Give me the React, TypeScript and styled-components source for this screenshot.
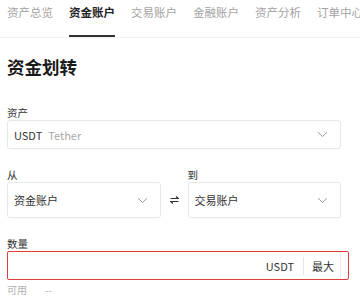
import styled, { createGlobalStyle } from 'styled-components'

const GlobalStyle = createGlobalStyle`
  html, body {
    margin: 0;
    padding: 0;
    background: #ffffff;
  }
  body {
    font-family: "Noto Sans CJK SC", "Noto Sans", sans-serif;
    color: #333333;
  }
  * { box-sizing: border-box; }
`

const Page = styled.div`
  width: 360px;
  height: 297px;
  overflow: hidden;
`

const TabBar = styled.nav`
  display: flex;
  gap: 16px;
  padding-left: 7px;
  height: 38px;
  border-bottom: 1px solid #f0f0f0;
  white-space: nowrap;
  overflow: hidden;
`

const Tab = styled.div<{ $active?: boolean }>`
  flex: none;
  padding-top: 4px;
  font-size: 11.5px;
  line-height: 17px;
  color: ${p => (p.$active ? '#222222' : '#a3a3a3')};
  font-weight: ${p => (p.$active ? 600 : 400)};
  border-bottom: 2px solid ${p => (p.$active ? '#333333' : 'transparent')};
  height: 37px;
`

const Content = styled.div`
  padding: 0 19px 0 7px;
`

const Title = styled.h1`
  margin: 19px 0 0;
  font-size: 17.5px;
  line-height: 20px;
  font-weight: 700;
  color: #1a1a1a;
`

const Label = styled.div`
  font-size: 10.5px;
  line-height: 14px;
  color: #333333;
`

const Field = styled.div<{ $top: number }>`
  display: flex;
  flex-direction: column;
  margin-top: ${p => p.$top}px;
`

const SelectBox = styled.div<{ $height: number }>`
  display: flex;
  align-items: center;
  height: ${p => p.$height}px;
  padding: 0 12px 0 6px;
  border: 1px solid #e8e8e8;
  border-radius: 3px;
  font-size: 11px;
  color: #333333;
  box-shadow: 0 1px 2px rgba(0, 0, 0, 0.03);
`

const SelectValue = styled.span`
  flex: 1;
  display: flex;
  gap: 6px;
`

const SubText = styled.span`
  color: #a8a8a8;
`

const Row = styled.div`
  display: grid;
  grid-template-columns: 1fr 27px 1fr;
  align-items: end;
  margin-top: 19px;
`

const SwapSlot = styled.div`
  height: 36px;
  display: flex;
  align-items: center;
  justify-content: center;
`

const AmountOutline = styled.div`
  width: 342px;
  border: 1.5px solid #e23b3b;
  border-radius: 2px;
  padding: 1px 7px 1px 0;
`

const AmountBox = styled.div`
  display: flex;
  align-items: center;
  justify-content: flex-end;
  height: 25px;
  border-right: 1px solid #ececec;
  font-size: 11px;
  color: #333333;
`

const Unit = styled.span`
  padding-right: 9px;
  border-right: 1px solid #e6e6e6;
  line-height: 18px;
`

const MaxButton = styled.span`
  padding: 0 6px 0 8px;
`

const Available = styled.div`
  display: flex;
  gap: 18px;
  margin-top: 3px;
  font-size: 10px;
  line-height: 13px;
  color: #b0b0b0;
`

const Chevron = () => (
  <svg width="11" height="7" viewBox="0 0 11 7" fill="none">
    <path d="M1 1.2 L5.5 5.5 L10 1.2" stroke="#9a9a9a" strokeWidth="1" />
  </svg>
)

const SwapIcon = () => (
  <svg width="9" height="8" viewBox="0 0 9 8" fill="none">
    <path d="M0.5 2.5 H8.5 L6 0.5" stroke="#333" strokeWidth="1.2" />
    <path d="M8.5 5.5 H0.5 L3 7.5" stroke="#333" strokeWidth="1.2" />
  </svg>
)

const tabs = ['资产总览', '资金账户', '交易账户', '金融账户', '资产分析', '订单中心']

export default function App() {
  return (
    <Page>
      <GlobalStyle />
      <TabBar>
        {tabs.map(t => (
          <Tab key={t} $active={t === '资金账户'}>{t}</Tab>
        ))}
      </TabBar>
      <Content>
        <Title>资金划转</Title>
        <Field $top={29}>
          <Label>资产</Label>
          <SelectBox $height={29}>
            <SelectValue>
              USDT <SubText>Tether</SubText>
            </SelectValue>
            <Chevron />
          </SelectBox>
        </Field>
        <Row>
          <Field $top={0}>
            <Label>从</Label>
            <SelectBox $height={36}>
              <SelectValue>资金账户</SelectValue>
              <Chevron />
            </SelectBox>
          </Field>
          <SwapSlot>
            <SwapIcon />
          </SwapSlot>
          <Field $top={0}>
            <Label>到</Label>
            <SelectBox $height={36}>
              <SelectValue>交易账户</SelectValue>
              <Chevron />
            </SelectBox>
          </Field>
        </Row>
        <Field $top={19}>
          <Label>数量</Label>
          <AmountOutline>
            <AmountBox>
              <Unit>USDT</Unit>
              <MaxButton>最大</MaxButton>
            </AmountBox>
          </AmountOutline>
        </Field>
        <Available>
          <span>可用</span>
          <span>--</span>
        </Available>
      </Content>
    </Page>
  )
}
